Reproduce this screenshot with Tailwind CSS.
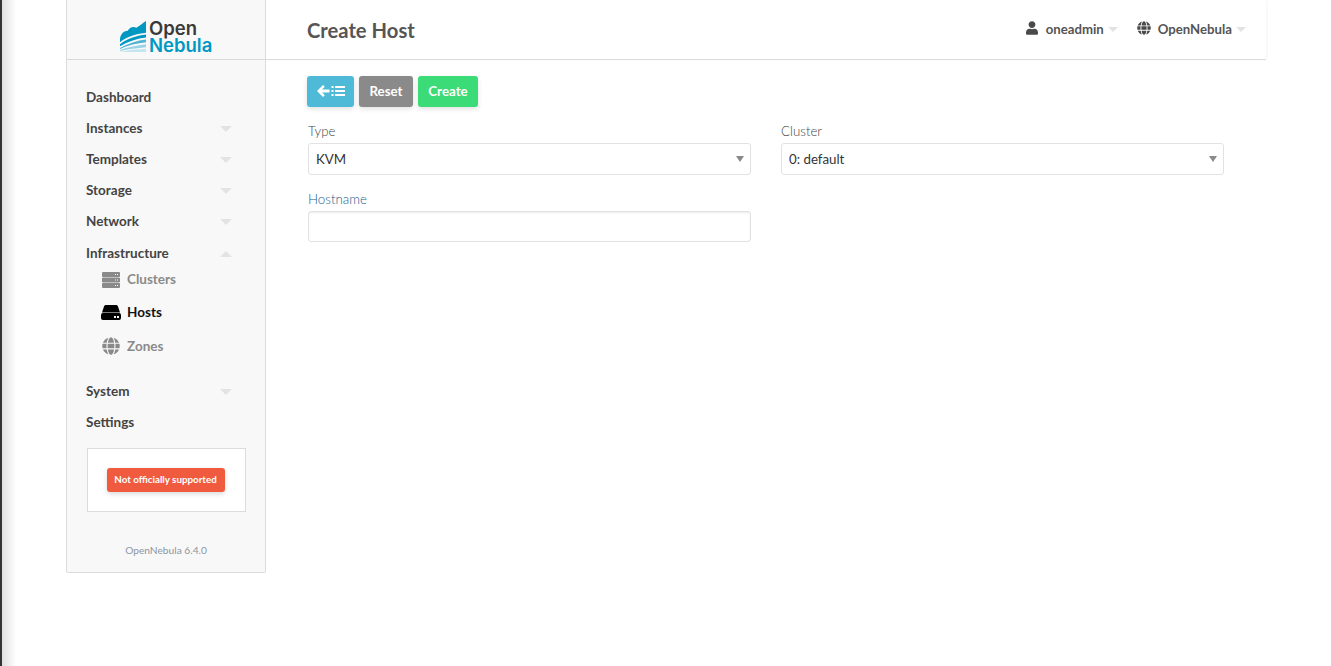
<!DOCTYPE html>
<html lang="en">
<head>
  <meta charset="UTF-8">
  <title>Create Host</title>
  <script src="https://cdn.jsdelivr.net/npm/@tailwindcss/browser@4"></script>
</head>
<body class="bg-white font-['Lato',sans-serif] text-[#4a4a4a] overflow-hidden">
  <div class="flex h-[666px] w-[1331px]">
    <!-- left window edge -->
    <div class="w-[16px] shrink-0 border-l-2 border-[#333] bg-linear-to-r from-[#e0e0e0] to-white"></div>

    <!-- Sidebar -->
    <div class="ml-[50px] w-[200px] h-[573px] shrink-0 flex flex-col bg-[#f8f8f8] border-x border-b border-[#dcdcdc] rounded-b-[2px]">
      <div class="h-[60px] shrink-0 border-b border-[#d8d8d8] flex items-center pl-[53px]">
        <svg class="w-[27px] h-[32px] mt-[14px] shrink-0" viewBox="0 0 28 33">
          <path fill="#0098c3" d="M0 18C1 13 4 10 8 10C10 6 14 5 17 7C20 5 24 2 27 0V12C18 13 8 15 0 22Z"/>
          <path fill="#0098c3" d="M0 24C8 18 18 15 27 14V17C18 18 8 21 0 26Z"/>
          <path fill="#4fb4d4" d="M0 28C8 23 18 20 27 19V22C18 23 8 25 0 29Z"/>
          <path fill="#9ad3e6" d="M0 30C8 27 18 25 27 24V27C18 28 8 29 0 31Z"/>
          <path fill="#c3e5f0" d="M0 32C8 30 18 29 27 29V32H3Z"/>
        </svg>
        <div class="ml-[2px] font-['Inter',sans-serif] font-semibold text-[18.500px] leading-[17px] mt-[15px]">
          <div class="text-[#3a3a3a]">Open</div>
          <div class="text-[#0098c3]">Nebula</div>
        </div>
      </div>

      <nav class="pt-[22px] pl-[19px] pr-[33px] text-[13.500px] font-bold text-[#444]">
        <div class="h-[31px] flex items-center">Dashboard</div>
        <div class="h-[31px] flex items-center justify-between">Instances<span class="border-x-[6px] border-x-transparent border-t-[6px] border-t-[#e3e3e3]"></span></div>
        <div class="h-[31px] flex items-center justify-between">Templates<span class="border-x-[6px] border-x-transparent border-t-[6px] border-t-[#e3e3e3]"></span></div>
        <div class="h-[31px] flex items-center justify-between">Storage<span class="border-x-[6px] border-x-transparent border-t-[6px] border-t-[#e3e3e3]"></span></div>
        <div class="h-[31px] flex items-center justify-between">Network<span class="border-x-[6px] border-x-transparent border-t-[6px] border-t-[#e3e3e3]"></span></div>
        <div class="h-[31px] mt-[1px] flex items-center justify-between">Infrastructure<span class="border-x-[6px] border-x-transparent border-b-[6px] border-b-[#e3e3e3]"></span></div>

        <div class="-mt-[6px] -mr-[33px]">
          <div class="h-[33px] flex items-center text-[#8a8a8a]">
            <svg class="ml-[16px] w-[18px] h-[16px]" viewBox="0 0 18 16" fill="#8a8a8a">
              <path fill-rule="evenodd" d="M1 0h16a1 1 0 0 1 1 1v3a1 1 0 0 1-1 1H1a1 1 0 0 1-1-1V1a1 1 0 0 1 1-1ZM13 2v1h1V2Zm2 0v1h1V2Z"/>
              <path fill-rule="evenodd" d="M1 5.500h16a1 1 0 0 1 1 1v3a1 1 0 0 1-1 1H1a1 1 0 0 1-1-1v-3a1 1 0 0 1 1-1ZM13 7.500v1h1v-1Zm2 0v1h1v-1Z"/>
              <path fill-rule="evenodd" d="M1 11h16a1 1 0 0 1 1 1v3a1 1 0 0 1-1 1H1a1 1 0 0 1-1-1v-3a1 1 0 0 1 1-1ZM13 13v1h1v-1Zm2 0v1h1v-1Z"/>
            </svg>
            <span class="ml-[7px]">Clusters</span>
          </div>
          <div class="h-[33px] flex items-center text-[#111]">
            <svg class="ml-[15px] w-[20px] h-[15px]" viewBox="0 0 20 15" fill="#000">
              <path d="M5 0h10c1 0 1.600.5 2 1.500L19 7.500H1L3 1.500C3.400.5 4 0 5 0Z"/>
              <path fill-rule="evenodd" d="M2 8h16a2 2 0 0 1 2 2v3a2 2 0 0 1-2 2H2a2 2 0 0 1-2-2v-3a2 2 0 0 1 2-2Zm11 3v2h2v-2Zm3 0v2h2v-2Z"/>
            </svg>
            <span class="ml-[6px]">Hosts</span>
          </div>
          <div class="h-[34px] flex items-center text-[#8a8a8a]">
            <svg class="ml-[16px] w-[18px] h-[18px]" viewBox="0 0 496 512" fill="#8a8a8a"><path d="M336.500 160C322 70.700 287.800 8 248 8s-74 62.700-88.500 152h177zM152 256c0 22.200 1.200 43.500 3.300 64h185.300c2.100-20.500 3.300-41.800 3.300-64s-1.200-43.500-3.300-64H155.300c-2.100 20.500-3.300 41.800-3.300 64zm324.700-96c-28.600-67.900-86.500-120.400-158-141.600 24.400 33.800 41.200 84.700 50 141.600h108zM177.200 18.400C105.800 39.600 47.800 92.100 19.300 160h108c8.700-56.900 25.500-107.800 49.900-141.600zM487.400 192H372.700c2.100 21 3.300 42.500 3.300 64s-1.200 43-3.300 64h114.600c5.500-20.500 8.600-41.800 8.600-64s-3.100-43.500-8.500-64zM120 256c0-21.500 1.200-43 3.300-64H8.600C3.200 212.500 0 233.800 0 256s3.200 43.500 8.600 64h114.600c-2-21-3.200-42.500-3.200-64zm39.500 96c14.500 89.300 48.700 152 88.500 152s74-62.700 88.500-152h-177zm159.300 141.600c71.400-21.200 129.400-73.700 158-141.600h-108c-8.800 56.900-25.600 107.800-50 141.600zM19.300 352c28.600 67.900 86.500 120.400 158 141.600-24.400-33.800-41.200-84.700-50-141.600h-108z"/></svg>
            <span class="ml-[7px]">Zones</span>
          </div>
        </div>

        <div class="h-[31px] mt-[13px] flex items-center justify-between">System<span class="border-x-[6px] border-x-transparent border-t-[6px] border-t-[#e3e3e3]"></span></div>
        <div class="h-[31px] flex items-center">Settings</div>
      </nav>

      <div class="ml-[20px] mr-[19px] mt-[10px] h-[64px] bg-white border border-[#dcdcdc] flex items-center justify-center pr-[2px]">
        <span class="h-[24px] w-[118px] pb-[2px] flex items-center justify-center rounded-[3px] bg-[#f05a3e] text-white text-[9.800px] font-bold shadow-[0_2px_5px_rgba(0,0,0,0.15)]">Not officially supported</span>
      </div>
      <div class="mt-[31px] text-center text-[10.200px] text-[#8d96a0]">OpenNebula 6.4.0</div>
    </div>

    <!-- Main Content -->
    <div class="w-[1000px] shrink-0">
      <header class="h-[60px] border-b border-[#dcdcdc] shadow-[1px_0_2px_rgba(0,0,0,0.05)] flex items-center pl-[41px] pr-[20px]">
        <h1 class="text-[20.200px] font-bold text-[#555] mt-[1px]">Create Host</h1>
        <div class="ml-auto flex items-center text-[13.200px] font-bold text-[#555]">
          <svg class="w-[12px] h-[14px] -mt-[2px]" viewBox="0 0 448 512" fill="#4a4a4a"><path d="M224 256c70.700 0 128-57.300 128-128S294.700 0 224 0 96 57.300 96 128s57.300 128 128 128zm89.600 32h-16.700c-22.200 10.200-46.900 16-72.900 16s-50.600-5.800-72.900-16h-16.700C60.200 288 0 348.200 0 422.400V464c0 26.500 21.500 48 48 48h352c26.500 0 48-21.500 48-48v-41.600c0-74.200-60.200-134.400-134.400-134.400z"/></svg>
          <span class="ml-[8px]">oneadmin</span>
          <span class="ml-[4px] border-x-[5px] border-x-transparent border-t-[5px] border-t-[#e3e3e3]"></span>
          <svg class="ml-[19px] w-[14px] h-[14px] -mt-[2px]" viewBox="0 0 496 512" fill="#4a4a4a"><path d="M336.500 160C322 70.700 287.800 8 248 8s-74 62.700-88.500 152h177zM152 256c0 22.200 1.200 43.500 3.300 64h185.300c2.100-20.500 3.300-41.800 3.300-64s-1.200-43.500-3.300-64H155.300c-2.100 20.500-3.300 41.800-3.300 64zm324.700-96c-28.600-67.900-86.500-120.400-158-141.600 24.400 33.800 41.200 84.700 50 141.600h108zM177.200 18.400C105.800 39.600 47.800 92.100 19.300 160h108c8.700-56.900 25.500-107.800 49.900-141.600zM487.400 192H372.700c2.100 21 3.300 42.500 3.300 64s-1.200 43-3.300 64h114.600c5.500-20.500 8.600-41.800 8.600-64s-3.100-43.500-8.500-64zM120 256c0-21.500 1.200-43 3.300-64H8.600C3.200 212.500 0 233.800 0 256s3.200 43.500 8.600 64h114.600c-2-21-3.200-42.500-3.200-64zm39.500 96c14.500 89.300 48.700 152 88.500 152s74-62.700 88.500-152h-177zm159.300 141.600c71.400-21.200 129.400-73.700 158-141.600h-108c-8.800 56.900-25.600 107.800-50 141.600zM19.300 352c28.600 67.900 86.500 120.400 158 141.600-24.400-33.800-41.200-84.700-50-141.600h-108z"/></svg>
          <span class="ml-[7px]">OpenNebula</span>
          <span class="ml-[4px] border-x-[5px] border-x-transparent border-t-[5px] border-t-[#e3e3e3]"></span>
        </div>
      </header>

      <div class="pl-[41px] pt-[16px]">
        <div class="flex gap-[5px] text-[13.300px] font-bold text-white">
          <button class="w-[47px] h-[31px] rounded-[3px] bg-[#4fbad8] shadow-[0_2px_5px_rgba(0,0,0,0.12)] flex items-center justify-center">
            <svg class="w-[28px] h-[12px] -mt-[1px]" viewBox="0 0 28 12" fill="#fff">
              <path d="M6 0 7.800 1.800 5.100 4.500H12.500v3H5.100l2.700 2.700L6 12 0 6Z"/>
              <path d="M14.500 1h2v2h-2Zm3.500 0H28v2H18ZM14.500 5h2v2h-2Zm3.500 0H28v2H18ZM14.500 9h2v2h-2Zm3.500 0H28v2H18Z"/>
            </svg>
          </button>
          <button class="w-[54px] h-[31px] rounded-[3px] bg-[#8a8a8a] shadow-[0_2px_5px_rgba(0,0,0,0.12)]">Reset</button>
          <button class="w-[60px] h-[31px] rounded-[3px] bg-[#3bdb78] shadow-[0_2px_5px_rgba(0,0,0,0.12)]">Create</button>
        </div>

        <form class="mt-[14px] ml-[1px] grid grid-cols-[443px_443px] gap-x-[30px] text-[13.300px]">
          <div>
            <label class="block h-[20px] leading-[20px] font-light text-[#444]">Type</label>
            <div class="relative mt-[2px]">
              <select class="appearance-none w-full h-[32px] pl-[7px] pt-[2px] bg-white border border-[#e2e2e2] rounded-[3px] text-[#333]"><option>KVM</option></select>
              <span class="absolute right-[7px] top-[13px] border-x-[4px] border-x-transparent border-t-[6px] border-t-[#8a8a8a]"></span>
            </div>
          </div>
          <div>
            <label class="block h-[20px] leading-[20px] font-light text-[#444]">Cluster</label>
            <div class="relative mt-[2px]">
              <select class="appearance-none w-full h-[32px] pl-[7px] pt-[2px] bg-white border border-[#e2e2e2] rounded-[3px] text-[#333]"><option>0: default</option></select>
              <span class="absolute right-[7px] top-[13px] border-x-[4px] border-x-transparent border-t-[6px] border-t-[#8a8a8a]"></span>
            </div>
          </div>
          <div class="mt-[14px]">
            <label class="block h-[20px] leading-[20px] font-light text-[#14608c]">Hostname</label>
            <input type="text" class="block mt-[2px] w-full h-[31px] bg-white border border-[#e2e2e2] rounded-[3px] shadow-[inset_0_1px_2px_rgba(0,0,0,0.08)]">
          </div>
        </form>
      </div>
    </div>
  </div>
</body>
</html>
